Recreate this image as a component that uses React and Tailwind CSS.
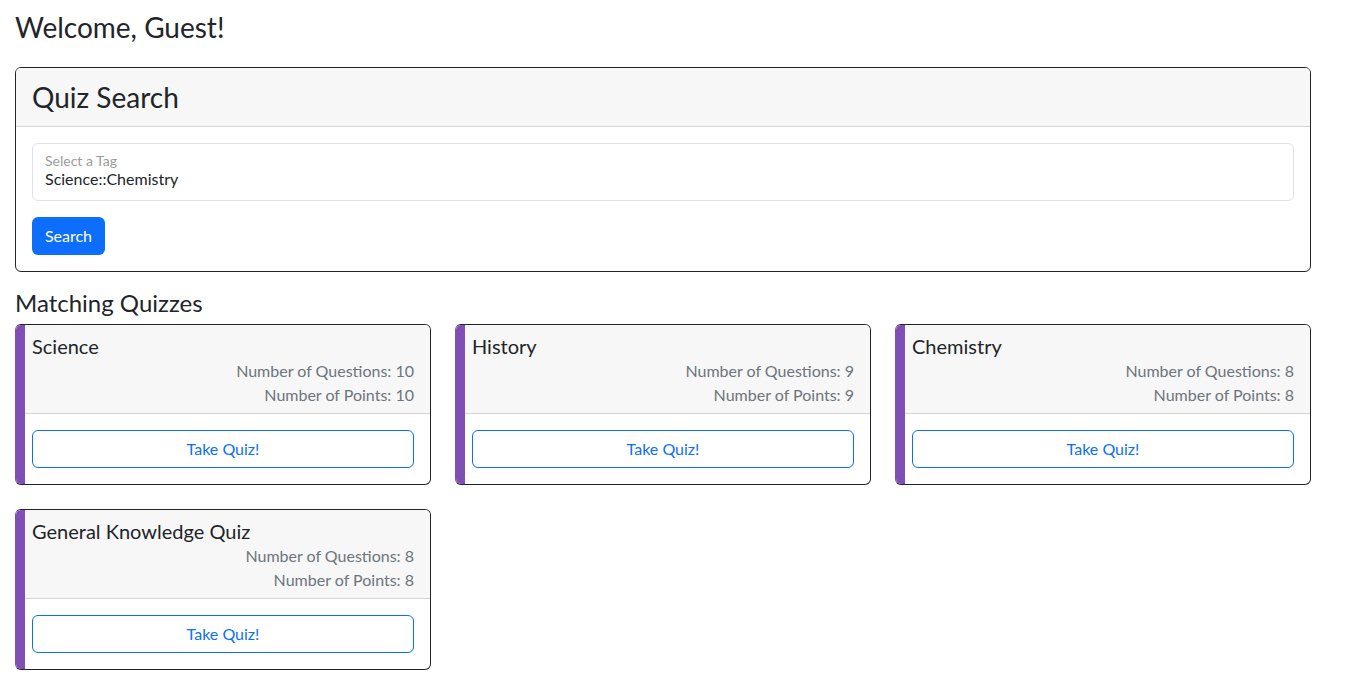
const QUIZZES = [
  { title: 'Science', questions: 10, points: 10 },
  { title: 'History', questions: 9, points: 9 },
  { title: 'Chemistry', questions: 8, points: 8 },
  { title: 'General Knowledge Quiz', questions: 8, points: 8 },
]

function QuizCard({ quiz }) {
  return (
    <div className="relative flex flex-col overflow-hidden rounded-md border border-[#212529] border-l-[#7f4fb3] bg-white">
      <span className="absolute inset-y-0 left-0 w-[9px] bg-[#7f4fb3]" />
      <div className="border-b border-[#d3d3d4] bg-[#f7f7f7] px-4 pb-[6px] pt-[9px]">
        <h5 className="text-[20px] leading-[25px] text-[#212529]">{quiz.title}</h5>
        <p className="text-right text-base leading-6 text-[#6c757d]">Number of Questions: {quiz.questions}</p>
        <p className="text-right text-base leading-6 text-[#6c757d]">Number of Points: {quiz.points}</p>
      </div>
      <div className="p-4">
        <button className="h-[38px] w-full rounded-md border border-[#0d6efd] bg-white text-base text-[#0d6efd]">
          Take Quiz!
        </button>
      </div>
    </div>
  )
}

export default function App() {
  return (
    <div className="min-h-screen bg-white pb-6 pl-[15px] pt-[6px] text-[#212529] [font-family:Lato,'Noto_Sans',sans-serif]">
      <div className="w-[1296px]">
        <h3 className="text-[28px] leading-[42px]">Welcome, Guest!</h3>

        {/* Search card */}
        <div className="mt-[19px] overflow-hidden rounded-md border border-[#212529]">
          <div className="border-b border-[#d3d3d4] bg-[#f7f7f7] px-4 py-2">
            <h3 className="text-[28px] leading-[42px]">Quiz Search</h3>
          </div>
          <div className="p-4">
            <div className="flex h-[58px] flex-col rounded-md border border-[#dee2e6] px-3 pt-[9px]">
              <span className="text-[14px] leading-4 text-[#9a9b9d]">Select a Tag</span>
              <span className="text-base leading-5">Science::Chemistry</span>
            </div>
            <button className="mt-4 h-[38px] w-[73px] rounded-md bg-[#0d6efd] text-base text-white">Search</button>
          </div>
        </div>

        <h4 className="mb-[3px] mt-[13px] text-[24px] leading-[36px]">Matching Quizzes</h4>

        <div className="grid grid-cols-3 gap-6">
          {QUIZZES.map((q) => (
            <QuizCard key={q.title} quiz={q} />
          ))}
        </div>
      </div>
    </div>
  )
}
